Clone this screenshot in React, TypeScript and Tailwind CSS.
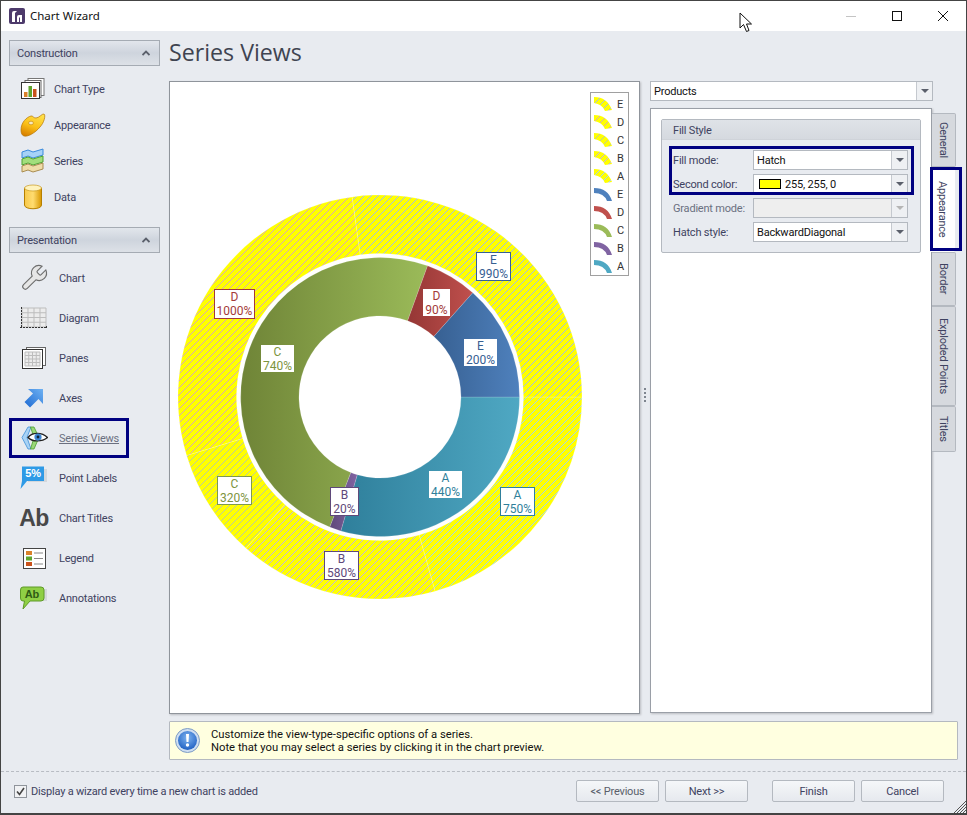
import { ReactNode } from "react";

const cx = 380;
const cy = 397;

const seriesColors: Record<string, { from: string; to: string; hatch: string }> = {
  A: { from: "#2f7f9b", to: "#4fa8c3", hatch: "#a4d4ec" },
  B: { from: "#5f497a", to: "#8064a2", hatch: "#c4b4e0" },
  C: { from: "#6f8437", to: "#9bbb59", hatch: "#bcc8a0" },
  D: { from: "#953735", to: "#c0504d", hatch: "#d8a8b4" },
  E: { from: "#376092", to: "#4f81bd", hatch: "#a4bce4" },
};

function arcPath(r1: number, r0: number, start: number, end: number) {
  const rad = (a: number) => (a * Math.PI) / 180;
  const pt = (r: number, a: number) => `${(cx + r * Math.cos(rad(a))).toFixed(2)} ${(cy + r * Math.sin(rad(a))).toFixed(2)}`;
  const large = end - start > 180 ? 1 : 0;
  return `M${pt(r1, start)} A${r1} ${r1} 0 ${large} 1 ${pt(r1, end)} L${pt(r0, end)} A${r0} ${r0} 0 ${large} 0 ${pt(r0, start)} Z`;
}

function slices(values: [string, number][]) {
  const total = values.reduce((s, v) => s + v[1], 0);
  let at = 0;
  return values.map(([name, v]) => {
    const start = at;
    at += (v / total) * 360;
    return { name, start, end: at };
  });
}

const inner = slices([["A", 440], ["B", 20], ["C", 740], ["D", 90], ["E", 200]]);
const outer = slices([["A", 750], ["B", 580], ["C", 320], ["D", 1000], ["E", 990]]);

function Donut() {
  return (
    <svg className="block w-full h-full" viewBox="170 82 469 631">
      <defs>
        {Object.entries(seriesColors).map(([k, c]) => (
          <linearGradient key={k} id={`grad-${k}`} x1="0" x2="1" y1="0" y2="0">
            <stop offset="0" stopColor={c.from} />
            <stop offset="1" stopColor={c.to} />
          </linearGradient>
        ))}
        {Object.entries(seriesColors).map(([k, c]) => (
          <pattern key={k} id={`hatch-${k}`} width="7" height="7" patternUnits="userSpaceOnUse">
            <rect width="7" height="7" fill="#ffff00" />
            {[0, 1, 2, 3, 4, 5, 6].map((i) => (
              <rect key={i} x={i} y={6 - i} width="1" height="1" fill={c.hatch} />
            ))}
          </pattern>
        ))}
      </defs>
      {outer.map((s) => (
        <path key={s.name} d={arcPath(202, 143.5, s.start, s.end)} fill={`url(#hatch-${s.name})`} stroke="#ffffff" strokeOpacity="0.3" strokeWidth="0.6" />
      ))}
      {inner.map((s) => (
        <path key={s.name} d={arcPath(139.5, 81, s.start, s.end)} fill={`url(#grad-${s.name})`} stroke="#ffffff" strokeOpacity="0.25" strokeWidth="0.6" />
      ))}
    </svg>
  );
}

const labels = [
  { t: "D", v: "1000%", pos: "left-[44px] top-[207px] w-[41px] h-[30px]", color: "text-[#a33a38]", border: "border border-[#a33a38]" },
  { t: "C", v: "740%", pos: "left-[91px] top-[263px] w-[33px] h-[27px]", color: "text-[#7d9440]", border: "" },
  { t: "B", v: "580%", pos: "left-[154px] top-[469px] w-[35px] h-[29px]", color: "text-[#5f497a]", border: "border border-[#5f497a]" },
  { t: "A", v: "750%", pos: "left-[330px] top-[405px] w-[35px] h-[29px]", color: "text-[#2f7f9b]", border: "border border-[#2f7f9b]" },
  { t: "A", v: "440%", pos: "left-[259px] top-[389px] w-[33px] h-[27px]", color: "text-[#2f7f9b]", border: "" },
  { t: "B", v: "20%", pos: "left-[160px] top-[405px] w-[29px] h-[29px]", color: "text-[#5f497a]", border: "border border-[#5f497a]" },
  { t: "E", v: "990%", pos: "left-[306px] top-[170px] w-[35px] h-[29px]", color: "text-[#376092]", border: "border border-[#376092]" },
  { t: "D", v: "90%", pos: "left-[253px] top-[207px] w-[27px] h-[27px]", color: "text-[#a33a38]", border: "" },
  { t: "E", v: "200%", pos: "left-[294px] top-[257px] w-[33px] h-[27px]", color: "text-[#376092]", border: "" },
  { t: "C", v: "320%", pos: "left-[47px] top-[394px] w-[35px] h-[29px]", color: "text-[#7d9440]", border: "border border-[#7f9a48]" },
];

const legendRows = ["E", "D", "C", "B", "A", "E", "D", "C", "B", "A"];

function Swatch({ name, hatched }: { name: string; hatched: boolean }) {
  const c = seriesColors[name];
  return hatched ? (
    <svg width="18" height="14" viewBox="0 0 18 14" className="shrink-0">
      <path d="M0 0 Q13 0 18 13 L11 14 Q8 7 0 6 Z" fill={`url(#hatch-${name})`} />
    </svg>
  ) : (
    <svg width="18" height="14" viewBox="0 0 18 14" className="shrink-0">
      <path d="M0 1 Q14 1 18 14 L13 14 Q10 6 0 6 Z" fill={c.to} />
    </svg>
  );
}

function Legend() {
  return (
    <div className="absolute left-[420px] top-[10px] w-[39px] h-[184px] border border-[#a0a0a0] bg-white pt-[2px] pl-[3px] flex flex-col">
      {legendRows.map((n, i) => (
        <div key={i} className="h-[18px] flex items-center gap-[5px] text-[11px] leading-none text-[#333]">
          <Swatch name={n} hatched={i < 5} />
          <span>{n}</span>
        </div>
      ))}
    </div>
  );
}

function ChartTypeIcon() {
  return (
    <svg width="26" height="24" viewBox="0 0 26 24">
      <rect x="8" y="1.5" width="16" height="17" fill="#fff" stroke="#777" />
      <rect x="5" y="3.5" width="16" height="17" fill="#fff" stroke="#666" />
      <rect x="1.5" y="5.5" width="18" height="16" fill="#fff" stroke="#333" />
      <rect x="4" y="15" width="3.5" height="5" fill="#d9822b" />
      <rect x="8.5" y="9" width="3.5" height="11" fill="#5fa52e" />
      <rect x="13" y="12" width="3.5" height="8" fill="#c9521c" />
    </svg>
  );
}

function PaletteIcon() {
  return (
    <svg width="26" height="25" viewBox="0 0 26 25">
      <defs>
        <linearGradient id="pal" x1="0.7" x2="0.3" y1="0" y2="1">
          <stop offset="0" stopColor="#ffe14a" />
          <stop offset="0.55" stopColor="#fbbf17" />
          <stop offset="1" stopColor="#d98200" />
        </linearGradient>
      </defs>
      <path d="M1 17 C1 9 7 4 11 3 C13 2.5 13 5 16 5 C19 5 22 0.5 24 1 C26 2 24 10 20 14 C15 20 8 24 4 23 C2 22.5 1 20 1 17 Z" fill="url(#pal)" stroke="#b57400" strokeWidth="0.7" />
      <ellipse cx="11" cy="10" rx="2.4" ry="1.8" fill="#f7e9c0" stroke="#b57400" strokeWidth="0.5" />
    </svg>
  );
}

function SeriesIcon() {
  const band = (y: number, fill: string, stroke: string) => (
    <path key={y} d={`M1 ${y + 3} L7 ${y + 1} L12 ${y + 3} L22 ${y} V${y + 6} L12 ${y + 9} L7 ${y + 7} L1 ${y + 9} Z`} fill={fill} stroke={stroke} strokeWidth="1" />
  );
  return (
    <svg width="24" height="26" viewBox="0 0 24 26">
      {band(1, "#a6d2f7", "#3a8bdc")}
      {band(8, "#a2de7c", "#4fa332")}
      {band(15, "#efdca8", "#a98c50")}
    </svg>
  );
}

function DataIcon() {
  return (
    <svg width="20" height="26" viewBox="0 0 20 26">
      <defs>
        <linearGradient id="cyl" x1="0" x2="1" y1="0" y2="0">
          <stop offset="0" stopColor="#f7c84a" />
          <stop offset="0.5" stopColor="#ffdc70" />
          <stop offset="1" stopColor="#d89700" />
        </linearGradient>
      </defs>
      <path d="M1.5 4 V21 C1.5 26 18.5 26 18.5 21 V4 Z" fill="url(#cyl)" stroke="#b67f00" />
      <ellipse cx="10" cy="4" rx="8.5" ry="3" fill="#fff3bd" stroke="#c99a20" strokeWidth="0.7" />
    </svg>
  );
}

function WrenchIcon() {
  return (
    <svg width="30" height="30" viewBox="0 0 24 24">
      <path d="M14.7 6.3a1 1 0 0 0 0 1.4l1.6 1.6a1 1 0 0 0 1.4 0l3.77-3.77a6 6 0 0 1-7.94 7.94l-6.91 6.91a2.12 2.12 0 0 1-3-3l6.91-6.91a6 6 0 0 1 7.94-7.94l-3.76 3.76z" fill="#e6e6e6" stroke="#6e6e6e" strokeWidth="0.9" />
    </svg>
  );
}

function GridCells({ x, y, w, h }: { x: number; y: number; w: number; h: number }) {
  const cols = [0, 1, 2, 3, 4].map((i) => x + (w * i) / 4);
  const rows = [0, 1, 2, 3, 4].map((i) => y + (h * i) / 4);
  return (
    <>
      <rect x={x} y={y} width={w} height={h} fill="#ececec" />
      {cols.map((c) => <line key={c} x1={c} x2={c} y1={y} y2={y + h} stroke="#bdbdbd" />)}
      {rows.map((r) => <line key={r} x1={x} x2={x + w} y1={r} y2={r} stroke="#bdbdbd" />)}
    </>
  );
}

function DiagramIcon() {
  return (
    <svg width="28" height="22" viewBox="0 0 28 22">
      <GridCells x={2} y={1} w={24} h={19} />
      <path d="M1.5 0 V21 M0 20.5 H27" stroke="#333" strokeDasharray="2 1" fill="none" />
      <path d="M26.5 19 V21" stroke="#333" />
    </svg>
  );
}

function PanesIcon() {
  return (
    <svg width="24" height="22" viewBox="0 0 24 22">
      <rect x="4.5" y="0.5" width="19" height="18" fill="#fff" stroke="#666" />
      <rect x="0.5" y="2.5" width="20" height="19" fill="#fff" stroke="#333" />
      <GridCells x={3} y={5} w={15} h={14} />
    </svg>
  );
}

function AxesIcon() {
  return (
    <svg width="20" height="20" viewBox="0 0 20 20">
      <defs>
        <linearGradient id="axs" x1="0" x2="1" y1="1" y2="0">
          <stop offset="0" stopColor="#1d69d2" />
          <stop offset="1" stopColor="#6eb1f2" />
        </linearGradient>
      </defs>
      <path d="M4 1 H19 V16 L14.5 11 L6 19.5 L0.5 14 L9 5.5 Z" fill="url(#axs)" />
    </svg>
  );
}

function SeriesViewsIcon() {
  return (
    <svg width="27" height="24" viewBox="0 0 27 24">
      <path d="M7 1 H10 L6 11.5 L10 23 H7 L1 11.5 Z" fill="#a9d3f5" stroke="#3f8fd8" strokeWidth="0.8" />
      <path d="M9.5 1 H13 L18 11.5 L13 23 H9.5 L13 11.5 Z" fill="#9ad878" stroke="#4a9c2e" strokeWidth="0.8" />
      <path d="M7 11.5 C11 6 21 6 26.5 11.5 C21 16 11 16 7 11.5 Z" fill="#fff" stroke="#222" strokeWidth="1.4" />
      <circle cx="17" cy="11" r="3.6" fill="#3f86d2" />
      <circle cx="17" cy="11" r="1.4" fill="#123" />
    </svg>
  );
}

function PointLabelsIcon() {
  return (
    <svg width="28" height="24" viewBox="0 0 28 24">
      <path d="M8 3 H27 V16 H8 Z" fill="#d4d8dc" />
      <path d="M2 0.5 H24 V15 H7 L0.5 23 L2 15 Z" fill="#2e9ae6" />
      <text x="13" y="11" textAnchor="middle" fontFamily="Liberation Sans" fontSize="11" fontWeight="700" fill="#fff">5%</text>
    </svg>
  );
}

function LegendIcon() {
  return (
    <svg width="24" height="22" viewBox="0 0 24 22">
      <rect x="1.5" y="1.5" width="22" height="20" fill="#fff" stroke="#444" />
      <rect x="4" y="4" width="6" height="4" fill="#d9822b" />
      <rect x="4" y="9.5" width="6" height="4" fill="#5fa52e" />
      <rect x="4" y="15" width="6" height="4" fill="#c9521c" />
      <path d="M12 6 H21 M12 11.5 H21 M12 17 H21" stroke="#888" />
    </svg>
  );
}

function AnnotationsIcon() {
  return (
    <svg width="28" height="24" viewBox="0 0 28 24">
      <path d="M20 3 H27 V15 H20 Z" fill="#d4d8dc" />
      <path d="M3 1 H21 Q24 1 24 4 V12 Q24 15 21 15 H10 L3 23 L4.5 15 H3 Q0.5 15 0.5 12 V4 Q0.5 1 3 1 Z" fill="#8fcf45" stroke="#5f9a28" />
      <text x="12" y="12" textAnchor="middle" fontFamily="Liberation Sans" fontSize="11" fontWeight="700" fill="#2f5a14">Ab</text>
    </svg>
  );
}

function InfoIcon() {
  return (
    <svg width="25" height="25" viewBox="0 0 25 25">
      <defs>
        <radialGradient id="inf" cx="0.5" cy="0.35" r="0.7">
          <stop offset="0" stopColor="#7fb4f0" />
          <stop offset="1" stopColor="#1a5cc0" />
        </radialGradient>
      </defs>
      <circle cx="12.5" cy="12.5" r="12" fill="#cfdff2" stroke="#7d9cc4" />
      <circle cx="12.5" cy="12.5" r="9.5" fill="url(#inf)" />
      <path d="M11 6 H14 L13.5 14 H11.5 Z" fill="#fff" />
      <circle cx="12.5" cy="17" r="1.7" fill="#fff" />
    </svg>
  );
}

function LogoIcon() {
  return (
    <svg width="16" height="16" viewBox="0 0 16 16">
      <rect width="16" height="16" rx="2" fill="#4d3a6b" />
      <path d="M3 14 V5 Q3 3 5 3 H8 L6 5 V14 Z M8 14 V9 Q8 7 10 7 H13 V14 H11 V9.5 H10 V14 Z" fill="#fff" />
    </svg>
  );
}

type NavItem = { label: string; icon: ReactNode; selected?: boolean };

const construction: NavItem[] = [
  { label: "Chart Type", icon: <ChartTypeIcon /> },
  { label: "Appearance", icon: <PaletteIcon /> },
  { label: "Series", icon: <SeriesIcon /> },
  { label: "Data", icon: <DataIcon /> },
];

const presentation: NavItem[] = [
  { label: "Chart", icon: <WrenchIcon /> },
  { label: "Diagram", icon: <DiagramIcon /> },
  { label: "Panes", icon: <PanesIcon /> },
  { label: "Axes", icon: <AxesIcon /> },
  { label: "Series Views", icon: <SeriesViewsIcon />, selected: true },
  { label: "Point Labels", icon: <PointLabelsIcon /> },
  { label: "Chart Titles", icon: <span className="font-['Liberation_Sans'] font-bold text-[23px] leading-none tracking-[-0.5px] text-[#484848]">Ab</span> },
  { label: "Legend", icon: <LegendIcon /> },
  { label: "Annotations", icon: <AnnotationsIcon /> },
];

function GroupHeader({ title }: { title: string }) {
  return (
    <div className="h-[26px] flex items-center justify-between pl-[7px] pr-[9px] border border-[#a5abb3] bg-gradient-to-b from-[#e2e6ec] via-[#ced4dd] to-[#dde1e7] text-[#3e4260]">
      <span>{title}</span>
      <svg width="8" height="6" viewBox="0 0 8 6">
        <path d="M0.5 5 L4 1.5 L7.5 5" fill="none" stroke="#5a5f6b" strokeWidth="1.8" />
      </svg>
    </div>
  );
}

function Sidebar() {
  return (
    <aside className="w-[168px] shrink-0 pl-[8px] pr-[9px] pt-[9px]">
      <GroupHeader title="Construction" />
      <div className="mt-[5px] mb-[12px]">
        {construction.map((it) => (
          <div key={it.label} className="h-[36px] flex items-center pl-[10px] text-[#3e4260]">
            <div className="w-[35px] flex justify-center pr-[8px]">{it.icon}</div>
            <span>{it.label}</span>
          </div>
        ))}
      </div>
      <GroupHeader title="Presentation" />
      <div className="mt-[5px]">
        {presentation.map((it) => (
          <div key={it.label} className="relative h-[40px] flex items-center pl-[10px] text-[#3e4260]">
            <div className="w-[40px] flex justify-center pr-[10px]">{it.icon}</div>
            <span className={it.selected ? "underline text-[#6b7080]" : ""}>{it.label}</span>
            {it.selected && <div className="absolute left-0 top-0 w-[120px] h-[40px] border-[3px] border-[#000080]" />}
          </div>
        ))}
      </div>
    </aside>
  );
}

function Combo({ children, disabled }: { children?: ReactNode; disabled?: boolean }) {
  return (
    <div className={`h-[20px] flex items-stretch border border-[#b4b9c0] ${disabled ? "bg-[#eeeeee]" : "bg-white"}`}>
      <div className="flex-1 flex items-center pl-[3px] text-[#111] whitespace-nowrap">{children}</div>
      <div className="w-[16px] border-l border-[#c5c9cf] bg-[#eef0f3] flex items-center justify-center">
        <svg width="8" height="4" viewBox="0 0 8 4">
          <path d="M0 0 H8 L4 4 Z" fill={disabled ? "#b5b5b5" : "#5a5f6b"} />
        </svg>
      </div>
    </div>
  );
}

function FieldRow({ label, muted, children }: { label: string; muted?: boolean; children: ReactNode }) {
  return (
    <div className="flex items-center h-[20px]">
      <span className={`w-[80px] shrink-0 ${muted ? "text-[#6b7080]" : "text-[#3e4260]"}`}>{label}</span>
      <div className="flex-1">{children}</div>
    </div>
  );
}

function VTab({ label, active, cls }: { label: string; active?: boolean; cls: string }) {
  return (
    <div className={`${cls} flex items-center justify-center border border-l-0 rounded-r-[2px] [writing-mode:vertical-rl] ${active ? "bg-white border-white -ml-[1px] w-[24px] text-[#3e4260]" : "w-[24px] bg-[#d6d9de] border-[#b4b9c0] text-[#3e4260]"}`}>
      {label}
    </div>
  );
}

function RightPanel() {
  return (
    <div className="w-[308px] shrink-0">
      <div className="w-[283px]">
        <Combo>Products</Combo>
      </div>
      <div className="relative mt-[7px] flex">
        <div className="w-[282px] h-[605px] bg-white border border-[#9a9fa7] shadow-[1px_1px_2px_rgba(0,0,0,0.2)] px-[10px] pt-[10px]">
          <div className="h-[134px] border border-[#b4b9c0] rounded-[2px] bg-[#e8ebf0]">
            <div className="h-[20px] flex items-center pl-[11px] pt-[1px] bg-gradient-to-b from-[#dfe3e8] to-[#d5d9df] border-b border-[#cfd3d9] text-[#3e4260]">Fill Style</div>
            <div className="relative pl-[11px] pr-[12px] pt-[10px] flex flex-col gap-[4px]">
              <FieldRow label="Fill mode:"><Combo>Hatch</Combo></FieldRow>
              <FieldRow label="Second color:">
                <Combo>
                  <span className="inline-block w-[22px] h-[10px] ml-[2px] mr-[4px] bg-[#ffff00] border border-black" />
                  255, 255, 0
                </Combo>
              </FieldRow>
              <FieldRow label="Gradient mode:" muted><Combo disabled /></FieldRow>
              <FieldRow label="Hatch style:"><Combo>BackwardDiagonal</Combo></FieldRow>
              <div className="absolute left-[7px] top-[6px] w-[245px] h-[49px] border-[3px] border-[#000080]" />
            </div>
          </div>
        </div>
        <div className="flex flex-col pt-[5px] text-[#3e4260]">
          <VTab label="General" cls="h-[54px]" />
          <VTab label="Appearance" cls="h-[85px]" active />
          <VTab label="Border" cls="h-[54px]" />
          <VTab label="Exploded Points" cls="h-[100px]" />
          <VTab label="Titles" cls="h-[46px]" />
        </div>
        <div className="absolute left-[280px] top-[59px] w-[32px] h-[84px] border-[3px] border-[#000080]" />
      </div>
    </div>
  );
}

function FooterButton({ children, cls }: { children: ReactNode; cls: string }) {
  return (
    <button className={`${cls} w-[83px] h-[22px] flex items-center justify-center rounded-[2px] border border-[#b4b9c0] bg-gradient-to-b from-[#f5f7f9] to-[#e6e9ee] text-[#3e4260]`}>
      {children}
    </button>
  );
}

export default function App() {
  return (
    <div className="relative w-[967px] h-[815px] box-border border border-b-2 border-[#444] bg-[#e8ebf0] flex flex-col overflow-hidden font-['Roboto',sans-serif] text-[11px] tracking-[-0.2px] leading-none">
      <header className="h-[30px] shrink-0 bg-white flex items-center pl-[8px]">
        <LogoIcon />
        <span className="ml-[5px] font-['Noto_Sans',sans-serif] text-[11.5px] tracking-normal text-[#111]">Chart Wizard</span>
        <div className="ml-auto flex items-center h-full">
          <div className="w-[46px] flex justify-center"><div className="w-[10px] h-px bg-[#c4c4c4]" /></div>
          <div className="w-[46px] flex justify-center"><div className="w-[10px] h-[10px] border border-[#111]" /></div>
          <div className="w-[46px] flex justify-center pr-[1px]">
            <svg width="10" height="10" viewBox="0 0 10 10"><path d="M0 0 L10 10 M10 0 L0 10" stroke="#111" /></svg>
          </div>
        </div>
      </header>

      <div className="flex flex-1 min-h-0">
        <Sidebar />
        <main className="flex-1 min-w-0">
          <h1 className="h-[44px] mb-[6px] flex items-center font-['Open_Sans',sans-serif] text-[23.2px] tracking-normal text-[#3f4450]">Series Views</h1>
          <div className="flex">
            <div className="relative w-[471px] h-[633px] shrink-0 bg-white border border-[#8f949b] shadow-[1px_1px_2px_rgba(0,0,0,0.2)]">
              <Donut />
              <Legend />
              {labels.map((l) => (
                <div key={l.t + l.v} className={`absolute ${l.pos} ${l.color} ${l.border} bg-white flex flex-col items-center justify-center gap-[2px] text-[12px] tracking-normal leading-[12px]`}>
                  <span>{l.t}</span>
                  <span>{l.v}</span>
                </div>
              ))}
            </div>
            <div className="w-[10px] shrink-0 flex flex-col items-center justify-center gap-[2px] pb-[6px]">
              {[0, 1, 2, 3].map((i) => <div key={i} className="w-[2px] h-[2px] bg-[#7e858f]" />)}
            </div>
            <RightPanel />
          </div>
          <div className="mt-[7px] w-[789px] h-[39px] flex items-center border border-[#b4b9c0] rounded-[1px] bg-[#ffffe0] pl-[5px] text-[#111] text-[11.25px] tracking-normal">
            <InfoIcon />
            <div className="ml-[11px] flex flex-col gap-[2px] leading-[11px]">
              <span>Customize the view-type-specific options of a series.</span>
              <span>Note that you may select a series by clicking it in the chart preview.</span>
            </div>
          </div>
        </main>
      </div>

      <footer className="h-[42px] shrink-0 border-t border-dashed border-[#b8bcc3] flex items-center pl-[13px] pr-[22px] pb-[3px] text-[#3e4260]">
        <div className="w-[13px] h-[13px] border border-[#8f949b] bg-[#f1f2f4] flex items-center justify-center">
          <svg width="9" height="9" viewBox="0 0 9 9"><path d="M1 4.5 L3.5 7.5 L8 1" fill="none" stroke="#444" strokeWidth="1.6" /></svg>
        </div>
        <span className="ml-[4px]">Display a wizard every time a new chart is added</span>
        <div className="ml-auto flex">
          <FooterButton cls="text-[#5a5f6b]">&lt;&lt; Previous</FooterButton>
          <FooterButton cls="ml-[6px]">Next &gt;&gt;</FooterButton>
          <FooterButton cls="ml-[24px]">Finish</FooterButton>
          <FooterButton cls="ml-[6px]">Cancel</FooterButton>
        </div>
      </footer>

      <svg className="absolute right-0 bottom-0" width="13" height="13" viewBox="0 0 13 13">
        <path d="M1 13 L13 1 M4 13 L13 4 M7 13 L13 7 M10 13 L13 10" stroke="#555" />
      </svg>
      <svg className="absolute left-[738px] top-[11px]" width="14" height="21" viewBox="0 0 14 21">
        <path d="M1 1 V16 L4.5 12.5 L7.5 19.5 L10 18.5 L7.5 12 H12.5 Z" fill="#fff" stroke="#111" />
      </svg>
    </div>
  );
}
